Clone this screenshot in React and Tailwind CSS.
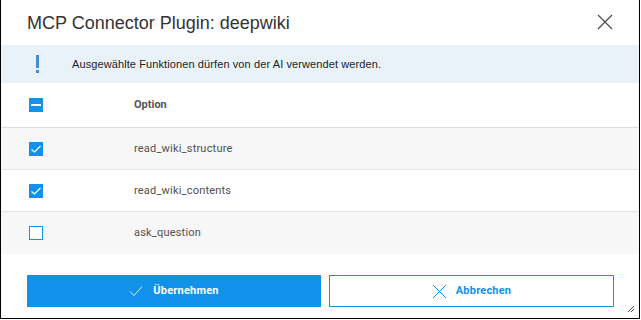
export default function App() {
  const rows = [
    { name: "read_wiki_structure", checked: true },
    { name: "read_wiki_contents", checked: true },
    { name: "ask_question", checked: false },
  ]

  return (
    <div className="w-[641px] h-[320px] bg-white">
      <div className="w-[640px] h-[319px] border-x border-b border-black bg-white flex flex-col relative">
        {/* header */}
        <div className="h-[45px] flex items-center justify-between pl-[26px] pr-[26px]">
          <h1 className="text-[18px] text-[#333] font-['Liberation_Sans',Arial,sans-serif] leading-none pt-[1px]">
            MCP Connector Plugin: deepwiki
          </h1>
          <svg width="16" height="16" viewBox="0 0 16 16" className="text-[#444] mt-[-1px]">
            <path d="M1 1L15 15M15 1L1 15" stroke="currentColor" strokeWidth="1.1" fill="none" />
          </svg>
        </div>

        {/* info bar */}
        <div className="h-[38px] bg-[#e9f2f9] flex items-center">
          <div className="w-[71px] flex justify-center pl-[2px]">
            <div className="flex flex-col items-center gap-[2px] mt-[-1px]">
              <div className="w-[3px] h-[13px] bg-[#3f8fd2]"></div>
              <div className="w-[3px] h-[3px] bg-[#3f8fd2]"></div>
            </div>
          </div>
          <span className="text-[11px] text-[#222] font-['Liberation_Sans',Arial,sans-serif] tracking-[0.1px]">
            Ausgewählte Funktionen dürfen von der AI verwendet werden.
          </span>
        </div>

        {/* table head */}
        <div className="h-[45px] flex items-center border-b border-[#dcdcdc]">
          <div className="w-[133px] pl-[28px]">
            <div className="w-[14px] h-[14px] bg-[#0f93ea] flex items-center justify-center">
              <div className="w-[10px] h-[2px] bg-white"></div>
            </div>
          </div>
          <span className="text-[11px] font-bold text-[#555] font-['Roboto',sans-serif] pt-[1px]">Option</span>
        </div>

        {rows.map((r, i) => (
          <div
            key={r.name}
            className={`h-[42px] flex items-center ${i % 2 === 0 ? "bg-[#f7f7f7]" : "bg-white"} ${i < rows.length - 1 ? "border-b border-[#e6e6e6]" : ""}`}
          >
            <div className="w-[133px] pl-[28px]">
              {r.checked ? (
                <div className="w-[14px] h-[14px] bg-[#0f93ea] flex items-center justify-center">
                  <svg width="12" height="10" viewBox="0 0 12 10">
                    <path d="M1.5 5.5L4.5 8L10.5 2" stroke="white" strokeWidth="1.2" fill="none" />
                  </svg>
                </div>
              ) : (
                <div className="w-[14px] h-[14px] border border-[#0f93ea] bg-white"></div>
              )}
            </div>
            <span className="text-[11px] text-[#505050] font-['Roboto',sans-serif] tracking-[0.2px] pt-[1px]">{r.name}</span>
          </div>
        ))}

        {/* buttons */}
        <div className="flex gap-[8px] pl-[26px] mt-[21px]">
          <button className="w-[294px] h-[32px] bg-[#1192ea] text-white flex items-center justify-center gap-[10px]">
            <svg width="14" height="12" viewBox="0 0 14 12">
              <path d="M1 6.5L5 10.5L13 1.5" stroke="white" strokeWidth="1" fill="none" opacity="0.85" />
            </svg>
            <span className="text-[11px] font-bold font-['Roboto',sans-serif] tracking-[0.2px]">Übernehmen</span>
          </button>
          <button className="w-[285px] h-[32px] border border-[#1192ea] bg-white text-[#1192ea] flex items-center justify-center gap-[9px]">
            <svg width="15" height="15" viewBox="0 0 15 15">
              <path d="M1 1L14 14M14 1L1 14" stroke="#1192ea" strokeWidth="1" fill="none" />
            </svg>
            <span className="text-[11px] font-bold font-['Roboto',sans-serif] tracking-[0.2px]">Abbrechen</span>
          </button>
        </div>

        {/* resize grip */}
        <svg width="8" height="8" viewBox="0 0 8 8" className="absolute right-[4px] bottom-[5px]">
          <path d="M7 1L1 7M7 4L4 7" stroke="#444" strokeWidth="1" fill="none" />
        </svg>
      </div>
    </div>
  )
}
